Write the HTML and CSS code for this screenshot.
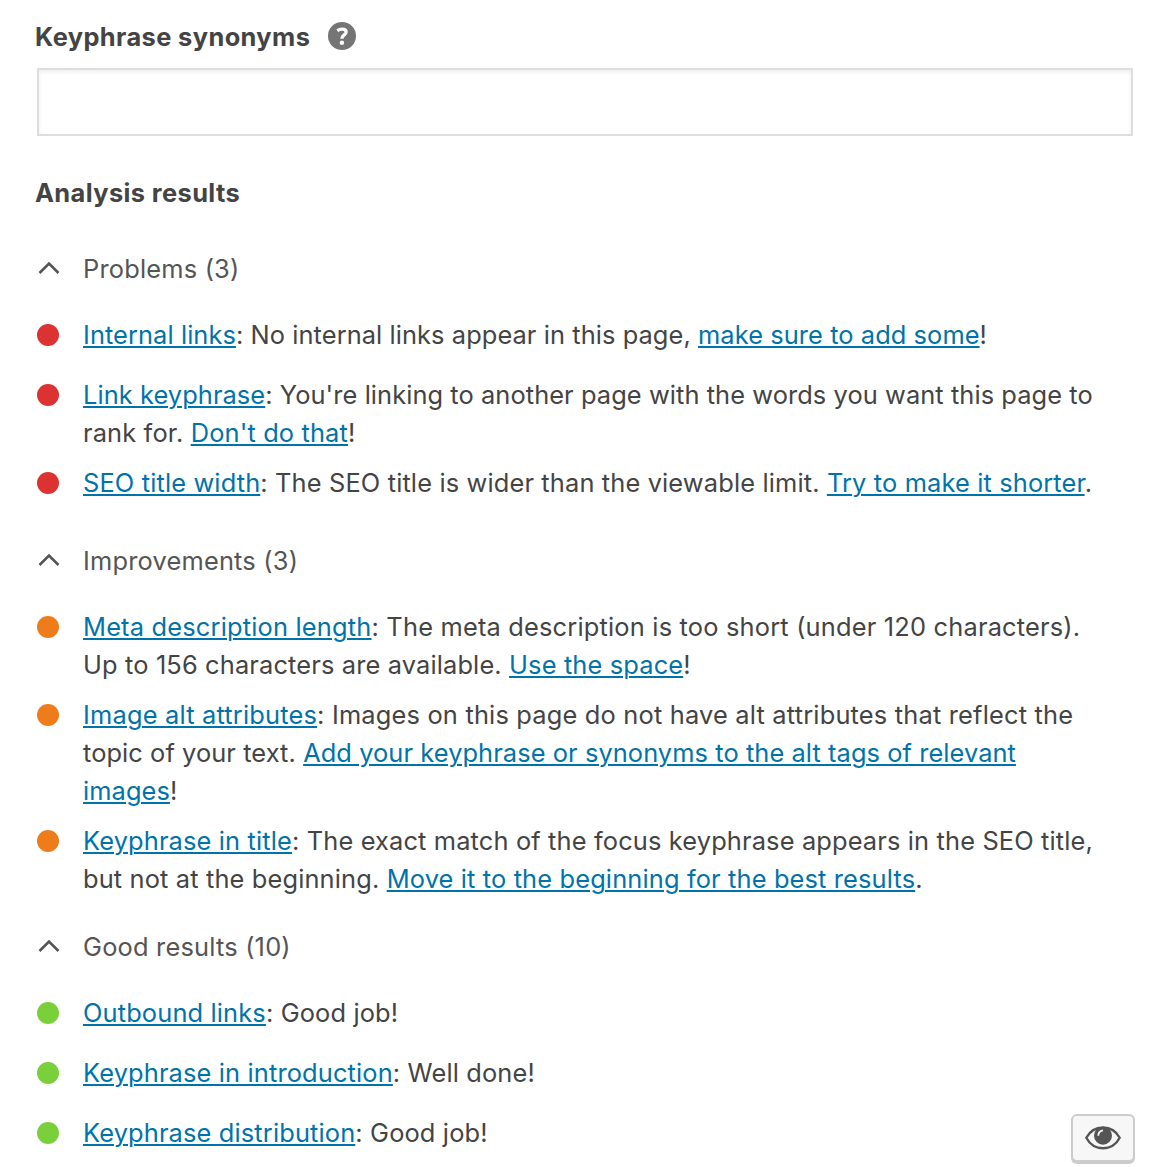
FILE: index.html
```html
<!DOCTYPE html>
<html lang="en">
<head>
    <meta charset="UTF-8">
    <meta name="viewport" content="width=device-width, initial-scale=1.0">
    <title>SEO analysis</title>
    <link rel="stylesheet" href="styles.css">
</head>
<body>
    <div class="panel">
        <div class="field-header">
            <label class="field-label" for="synonyms">Keyphrase synonyms</label>
            <button class="help" type="button" aria-label="Help">
                <svg width="28" height="28" viewBox="0 0 28 28">
                    <circle cx="14" cy="14" r="14" fill="#757575"/>
                    <path d="M9.2 8.6C10.8 7.600 12.500 7.200 14.200 7.200C16.800 7.200 18.100 8.400 18.100 10.200C18.100 13 13.900 12.900 13.900 16.700" fill="none" stroke="#fff" stroke-width="3.300"/>
                    <circle cx="13.900" cy="20.700" r="2.200" fill="#fff"/>
                </svg>
            </button>
        </div>
        <input class="field-input" id="synonyms" type="text">

        <h2 class="title">Analysis results</h2>

        <!-- Problems -->
        <h3 class="group">
            <svg class="chevron" width="22" height="14" viewBox="0 0 22 14"><path d="M1.5 12L11 2.5L20.5 12"/></svg>
            <span>Problems (3)</span>
        </h3>
        <ul class="results">
            <li class="result bad"><p class="snug"><a href="#">Internal links</a>: No internal links appear in this page, <a href="#">make sure to add some</a>!</p></li>
            <li class="result bad"><p><span class="snug"><a href="#">Link keyphrase</a>: You're linking to another page with the words you want this page to</span><br>rank for. <a href="#">Don't do that</a>!</p></li>
            <li class="result bad"><p><a href="#">SEO title width</a>: The SEO title is wider than the viewable limit. <a href="#">Try to make it shorter</a>.</p></li>
        </ul>

        <!-- Improvements -->
        <h3 class="group">
            <svg class="chevron" width="22" height="14" viewBox="0 0 22 14"><path d="M1.5 12L11 2.5L20.5 12"/></svg>
            <span>Improvements (3)</span>
        </h3>
        <ul class="results">
            <li class="result ok"><p><span class="loose"><a href="#">Meta description length</a>: The meta description is too short (under 120 characters).</span><br>Up to 156 characters are available. <a href="#">Use the space</a>!</p></li>
            <li class="result ok"><p class="snug"><span class="loose"><a href="#">Image alt attributes</a>: Images on this page do not have alt attributes that reflect the</span><br>topic of your text. <a href="#">Add your keyphrase or synonyms to the alt tags of relevant<br>images</a>!</p></li>
            <li class="result ok"><p><a href="#">Keyphrase in title</a>: The exact match of the focus keyphrase appears in the SEO title,<br>but not at the beginning. <a href="#">Move it to the beginning for the best results</a>.</p></li>
        </ul>

        <!-- Good results -->
        <h3 class="group">
            <svg class="chevron" width="22" height="14" viewBox="0 0 22 14"><path d="M1.5 12L11 2.5L20.5 12"/></svg>
            <span>Good results (10)</span>
        </h3>
        <ul class="results">
            <li class="result good"><p><a href="#">Outbound links</a>: Good job!</p></li>
            <li class="result good"><p><a href="#">Keyphrase in introduction</a>: Well done!</p></li>
            <li class="result good"><p><a href="#">Keyphrase distribution</a>: Good job!</p></li>
        </ul>

        <button class="eye" type="button" aria-label="Show highlights">
            <svg width="36" height="24" viewBox="0 0 36 24">
                <path d="M1.3 11.800C5 5 11 1.500 18 1.500S31 5 34.700 11.800C31 18.800 25 22.200 18 22.200S5 18.800 1.300 11.800Z" fill="none" stroke="#555" stroke-width="2.400"/>
                <circle cx="18" cy="9.700" r="9" fill="#555"/>
                <path d="M13.300 9.700C13.300 6.700 15.300 4.700 18 4.300" fill="none" stroke="#f7f7f7" stroke-width="1.800"/>
            </svg>
        </button>
    </div>
</body>
</html>
```
FILE: styles.css
```css
* {
    box-sizing: border-box;
}
body {
    margin: 0;
    height: 1167px;
    overflow: hidden;
    background: #fff;
    color: #444;
    font-family: Inter, "Liberation Sans", sans-serif;
    font-size: 25.4px;
    line-height: 38px;
    letter-spacing: 0.145px;
}
.panel {
    position: relative;
    height: 1167px;
    padding: 18px 42px 0 35px;
}
.field-header {
    display: flex;
    align-items: center;
    height: 36px;
}
.field-label,
.title {
    font-size: 25.4px;
    font-weight: 700;
    letter-spacing: 0.4px;
}
.field-label {
    padding-top: 2px;
}
.help {
    display: flex;
    margin-left: 18px;
    padding: 0;
    border: none;
    background: none;
}
.field-input {
    display: block;
    width: 1096px;
    height: 68px;
    margin: 14px 0 0 2px;
    border: 2px solid #ddd;
    background: #fff;
    box-shadow: inset 0 2px 4px rgba(0,0,0,0.07);
}
.title {
    margin: 38px 0 8px;
}
.group {
    display: flex;
    align-items: center;
    margin: 0;
    padding: 30px 0 28px 3px;
    color: #555;
    font-size: 25.4px;
    font-weight: 400;
    letter-spacing: 0.2px;
}
.chevron {
    margin: 0 23px 2px 0;
    fill: none;
    stroke: #555;
    stroke-width: 2.6;
}
.results {
    display: flex;
    flex-direction: column;
    gap: 12px;
    margin: 0;
    padding: 0;
    list-style: none;
}
.result {
    display: flex;
    min-height: 48px;
}
.result::before {
    content: "";
    flex: none;
    width: 22px;
    height: 22px;
    margin: 8px 24px 0 2px;
    border-radius: 50%;
}
.bad::before {
    background: #dc3232;
}
.ok::before {
    background: #ee7c1b;
}
.good::before {
    background: #7ad03a;
}
.result p {
    margin: 0;
    white-space: nowrap;
}
.snug {
    letter-spacing: 0.08px;
}
.loose {
    letter-spacing: 0.19px;
}
a {
    color: #0073aa;
    text-decoration: underline;
    text-decoration-thickness: 2px;
    text-underline-offset: 2px;
}
/* Floats over the bottom right corner of the list */
.eye {
    position: absolute;
    top: 1114px;
    right: 40px;
    display: flex;
    align-items: center;
    justify-content: center;
    width: 64px;
    height: 48px;
    padding: 0;
    border: 2px solid #ccc;
    border-radius: 6px;
    background: #f7f7f7;
    box-shadow: 0 2px 0 #ccc;
}
```
